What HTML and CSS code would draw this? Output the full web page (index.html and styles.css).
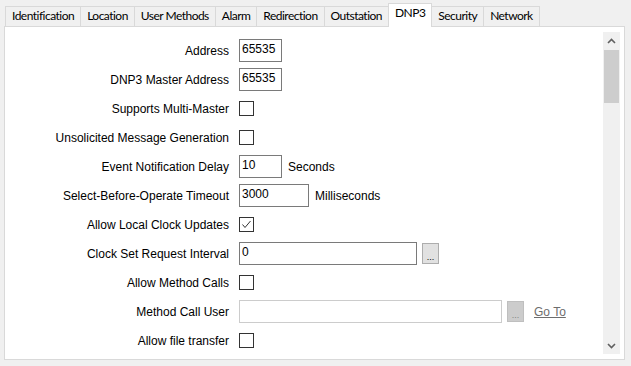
FILE: index.html
```html
<!DOCTYPE html>
<html lang="en">
<head>
    <meta charset="UTF-8">
    <title>DNP3 Settings</title>
    <link rel="stylesheet" href="styles.css">
</head>
<body>

<div class="tabs">
    <div class="tab">Identification</div>
    <div class="tab">Location</div>
    <div class="tab">User Methods</div>
    <div class="tab">Alarm</div>
    <div class="tab">Redirection</div>
    <div class="tab">Outstation</div>
    <div class="tab active">DNP3</div>
    <div class="tab">Security</div>
    <div class="tab">Network</div>
</div>

<div class="panel">
    <div class="form">
        <label>Address</label>
        <div class="ctl"><input class="num" type="text" value="65535"></div>

        <label>DNP3 Master Address</label>
        <div class="ctl"><input class="num" type="text" value="65535"></div>

        <label>Supports Multi-Master</label>
        <div class="ctl"><span class="check"></span></div>

        <label>Unsolicited Message Generation</label>
        <div class="ctl"><span class="check"></span></div>

        <label>Event Notification Delay</label>
        <div class="ctl"><input class="num" type="text" value="10"><span class="unit">Seconds</span></div>

        <label>Select-Before-Operate Timeout</label>
        <div class="ctl"><input class="mid" type="text" value="3000"><span class="unit">Milliseconds</span></div>

        <label>Allow Local Clock Updates</label>
        <div class="ctl">
            <span class="check">
                <svg width="13" height="13" viewBox="0 0 13 13"><path d="M2.5 6.5 L5 9.5 L10.5 3" fill="none" stroke="#333" stroke-width="1"/></svg>
            </span>
        </div>

        <label>Clock Set Request Interval</label>
        <div class="ctl"><input class="wide" type="text" value="0"><button class="dots">...</button></div>

        <label>Allow Method Calls</label>
        <div class="ctl"><span class="check"></span></div>

        <label>Method Call User</label>
        <div class="ctl"><input class="user" type="text" disabled><button class="dots" disabled>...</button><a class="goto" href="#">Go To</a></div>

        <label>Allow file transfer</label>
        <div class="ctl"><span class="check"></span></div>
    </div>

    <div class="scrollbar">
        <div class="arrow">
            <svg width="9" height="6" viewBox="0 0 9 6"><path d="M1 5 L4.5 1.5 L8 5" fill="none" stroke="#606060" stroke-width="1.6"/></svg>
        </div>
        <div class="thumb"></div>
        <div class="track"></div>
        <div class="arrow">
            <svg width="9" height="6" viewBox="0 0 9 6"><path d="M1 1 L4.5 4.5 L8 1" fill="none" stroke="#606060" stroke-width="1.6"/></svg>
        </div>
    </div>
</div>

</body>
</html>
```

FILE: styles.css
```css
body {
    margin: 0;
    padding: 0;
    background-color: #f0f0f0;
    font-family: "Liberation Sans", Arial, sans-serif;
    font-size: 12px;
    color: #000;
}
.tabs {
    display: flex;
    align-items: flex-end;
    height: 26px;
    padding-left: 5px;
}
.tab {
    height: 19px;
    line-height: 18px;
    padding: 0 6px;
    border: 1px solid #d9d9d9;
    border-bottom: none;
    margin-right: -1px;
    font-family: Lato, "Noto Sans", sans-serif;
    font-size: 12px;
    letter-spacing: -0.52px;
    background-color: #f0f0f0;
}
.tab.active {
    height: 23px;
    line-height: 17px;
    background-color: #fff;
    position: relative;
    z-index: 2;
    margin-bottom: -1px;
}
.panel {
    display: flex;
    margin-left: 4px;
    width: 619px;
    height: 322px;
    border: 1px solid #d9d9d9;
    background-color: #fff;
    padding: 5px 0;
}
.form {
    flex: 1;
    display: grid;
    grid-template-columns: 224px 1fr;
    grid-auto-rows: 29px;
    column-gap: 10px;
    align-items: center;
    align-content: start;
    padding-top: 4px;
}
.form label {
    text-align: right;
    white-space: nowrap;
}
.ctl {
    display: flex;
    align-items: center;
}
input {
    box-sizing: border-box;
    height: 23px;
    border: 1px solid #7a7a7a;
    padding: 0 2px 4px 2px;
    margin: 0;
    font-family: "Liberation Sans", Arial, sans-serif;
    font-size: 12px;
    color: #000;
    background: #fff;
    outline: none;
}
input.num { width: 43px; }
input.mid { width: 70px; }
input.wide { width: 178px; }
input.user {
    width: 263px;
    border-color: #cccccc;
}
.unit {
    margin-left: 6px;
}
.check {
    display: block;
    width: 13px;
    height: 13px;
    border: 1px solid #333;
    background: #fff;
}
.check svg {
    display: block;
}
.dots {
    box-sizing: border-box;
    width: 17px;
    height: 21px;
    margin-left: 5px;
    padding: 6px 0 0 0;
    border: 1px solid #adadad;
    background-color: #e1e1e1;
    font-family: "Liberation Sans", Arial, sans-serif;
    font-size: 9px;
    color: #000;
}
.dots:disabled {
    background-color: #cccccc;
    border-color: #bfbfbf;
    color: #838383;
}
.goto {
    margin-left: 10px;
    color: #6d6d6d;
    text-decoration: underline;
}
.scrollbar {
    display: flex;
    flex-direction: column;
    width: 17px;
    margin-right: 4px;
    background-color: #f0f0f0;
}
.arrow {
    height: 17px;
    display: flex;
    align-items: center;
    justify-content: center;
}
.thumb {
    height: 53px;
    margin: 1px 1px 0 1px;
    background-color: #cdcdcd;
}
.track {
    flex: 1;
}
```
